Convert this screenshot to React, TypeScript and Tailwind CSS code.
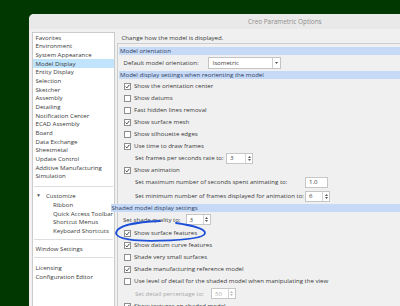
import React from "react";

const F = { fontFamily: '"Open Sans", "Noto Sans", sans-serif' };

function Box({ checked }: { checked: boolean }) {
  return (
    <div className="w-[7px] h-[7px] border border-[#8e8e8e] bg-white flex items-center justify-center shrink-0">
      {checked && (
        <svg width="5" height="5" viewBox="0 0 5 5">
          <path d="M0.6 2.6 L1.9 3.9 L4.4 0.8" stroke="#333" strokeWidth="0.9" fill="none" />
        </svg>
      )}
    </div>
  );
}

function Check({ checked, label }: { checked: boolean; label: string }) {
  return (
    <div className="h-[12px] flex items-center pl-[6px] shrink-0">
      <Box checked={checked} />
      <span className="ml-[3.5px] whitespace-nowrap">{label}</span>
    </div>
  );
}

function Spin({ value, w, disabled, arrows = true }: { value: string; w: string; disabled?: boolean; arrows?: boolean }) {
  return (
    <div className={`h-[11px] ${w} border border-[#c6c6c6] bg-white flex shrink-0`}>
      <div className={`flex-1 pl-[3px] flex items-center ${disabled ? "text-[#b0b0b0]" : ""}`}>{value}</div>
      {arrows && (
        <div className="w-[7px] border-l border-[#d4d4d4] flex flex-col items-center justify-center gap-[1px]">
          <svg width="3" height="2" viewBox="0 0 3 2"><path d="M0 2 L1.5 0 L3 2Z" fill={disabled ? "#bbb" : "#555"} /></svg>
          <svg width="3" height="2" viewBox="0 0 3 2"><path d="M0 0 L1.5 2 L3 0Z" fill={disabled ? "#bbb" : "#555"} /></svg>
        </div>
      )}
    </div>
  );
}

function Header({ text, shift }: { text: string; shift?: boolean }) {
  return (
    <div
      className={`h-[8px] ${shift ? "ml-[-7px]" : "ml-[1.5px]"} bg-[#c6daf7] pl-[1px] flex items-center whitespace-nowrap shrink-0 text-[#2e3d5c]`}
    >
      {text}
    </div>
  );
}

const items1 = [
  "Favorites",
  "Environment",
  "System Appearance",
  "Model Display",
  "Entity Display",
  "Selection",
  "Sketcher",
  "Assembly",
  "Detailing",
  "Notification Center",
  "ECAD Assembly",
  "Board",
  "Data Exchange",
  "Sheetmetal",
  "Update Control",
  "Additive Manufacturing",
  "Simulation",
];

function Item({ t, sel, indent }: { t: string; sel?: boolean; indent?: boolean }) {
  return (
    <div
      className={`h-[8.667px] flex items-center whitespace-nowrap ${indent ? "pl-[20px]" : "pl-[2.5px]"} ${
        sel ? "bg-[#bfe4fc]" : ""
      }`}
    >
      {t}
    </div>
  );
}

export default function App() {
  return (
    <div className="w-[400px] h-[306px] bg-[#013801] overflow-hidden relative text-[6.1px] text-[#3a3a3a]" style={F}>
      <div className="ml-[29px] mt-[14px] w-[520px] h-[292px] rounded-tl-[5px] bg-[#f0f0f0] flex flex-col overflow-hidden">
        <div className="h-[15px] bg-[#e9e9e9] text-[#8d8d8d] text-[6.4px] pl-[219px] flex items-center shrink-0">
          Creo Parametric Options
        </div>
        <div className="flex flex-1 pt-[3px]">
          {/* left list */}
          <div className="ml-[3px] w-[83px] border border-[#cbcbcb] bg-white flex flex-col shrink-0">
            {items1.map((t) => (
              <Item key={t} t={t} sel={t === "Model Display"} />
            ))}
            <div className="pt-[5.5px] pb-[5px] px-[1px]"><div className="h-px bg-[#dedede]" /></div>
            <div className="h-[8.667px] flex items-center pl-[3px] whitespace-nowrap">
              <span className="text-[5px] text-[#555]">▼</span>
              <span className="ml-[5px]">Customize</span>
            </div>
            <Item t="Ribbon" indent />
            <Item t="Quick Access Toolbar" indent />
            <Item t="Shortcut Menus" indent />
            <Item t="Keyboard Shortcuts" indent />
            <div className="pt-[4px] pb-[4px] px-[1px]"><div className="h-px bg-[#dedede]" /></div>
            <Item t="Window Settings" />
            <div className="pt-[4.5px] pb-[5px] px-[1px]"><div className="h-px bg-[#dedede]" /></div>
            <Item t="Licensing" />
            <Item t="Configuration Editor" />
          </div>
          {/* right */}
          <div className="ml-[1.5px] flex-1 flex flex-col">
            <div className="h-[11px] pl-[5px] flex items-center whitespace-nowrap shrink-0">
              Change how the model is displayed.
            </div>
            <div className="flex-1 border-t border-l border-[#cdcdcd] pt-[3px] flex flex-col">
              <Header text="Model orientation" />
              <div className="h-[16px] flex items-center pl-[6px] shrink-0">
                <span className="w-[84px] whitespace-nowrap">Default model orientation:</span>
                <div className="w-[73.5px] h-[12px] border border-[#c4c4c4] bg-white flex">
                  <div className="flex-1 pl-[4px] flex items-center">Isometric</div>
                  <div className="w-[8px] border-l border-[#d0d0d0] flex items-center justify-center">
                    <svg width="3" height="2" viewBox="0 0 3 2"><path d="M0 0 L1.5 2 L3 0Z" fill="#555" /></svg>
                  </div>
                </div>
              </div>
              <Header text="Model display settings when reorienting the model" />
              <div className="h-[1px] shrink-0" />
              <Check checked label="Show the orientation center" />
              <Check checked={false} label="Show datums" />
              <Check checked={false} label="Fast hidden lines removal" />
              <Check checked label="Show surface mesh" />
              <Check checked={false} label="Show silhouette edges" />
              <Check checked label="Use time to draw frames" />
              <div className="h-[12px] flex items-center pl-[17.5px] shrink-0">
                <span className="w-[91px] whitespace-nowrap">Set frames per seconds rate to:</span>
                <Spin value="3" w="w-[27px]" />
              </div>
              <Check checked label="Show animation" />
              <div className="h-[12px] flex items-center pl-[17.5px] shrink-0">
                <span className="w-[170px] whitespace-nowrap">Set maximum number of seconds spent animating to:</span>
                <Spin value="1.0" w="w-[23px]" arrows={false} />
              </div>
              <div className="h-[16px] flex items-center pl-[17.5px] shrink-0">
                <span className="w-[170px] whitespace-nowrap">Set minimum number of frames displayed for animation to:</span>
                <Spin value="6" w="w-[25px]" />
              </div>
              <Header text="Shaded model display settings" shift />
              <div className="h-[15px] flex items-center pl-[5.5px] shrink-0">
                <span className="w-[62.5px] whitespace-nowrap">Set shade quality to:</span>
                <Spin value="3" w="w-[25px]" />
              </div>
              <Check checked label="Show surface features" />
              <Check checked label="Show datum curve features" />
              <Check checked={false} label="Shade very small surfaces" />
              <Check checked label="Shade manufacturing reference model" />
              <Check checked={false} label="Use level of detail for the shaded model when manipulating the view" />
              <div className="h-[13px] flex items-center pl-[17.5px] shrink-0">
                <span className="w-[76px] whitespace-nowrap text-[#a8a8a8]">Set detail percentage to:</span>
                <Spin value="50" w="w-[24.5px]" disabled />
              </div>
              <Check checked label="Show textures on shaded model" />
            </div>
          </div>
        </div>
      </div>
      <svg className="absolute inset-0 pointer-events-none" width="400" height="306" viewBox="0 0 400 306">
        <path
          d="M160 221 C135 222, 117 226, 116 233 C116 239, 135 241.5, 160 240.7 C185 240, 205 238, 205 233 C205 229, 196 226, 176 223"
          stroke="#1c4ed8"
          strokeWidth="1.8"
          fill="none"
          strokeLinecap="round"
        />
      </svg>
    </div>
  );
}
